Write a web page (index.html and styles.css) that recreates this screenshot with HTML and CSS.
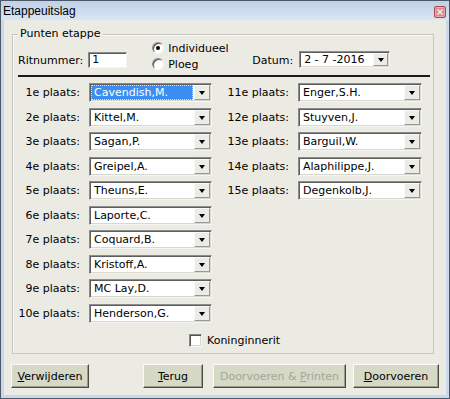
FILE: index.html
```html
<!DOCTYPE html>
<html>
<head>
<meta charset="utf-8">
<link rel="stylesheet" href="styles.css">
</head>
<body>
<div class="window">
  <div class="titlebar">
    <span class="title">Etappeuitslag</span>
    <span class="close">
      <svg width="12" height="12" viewBox="0 0 12 12">
        <rect x="0.5" y="0.5" width="11" height="11" rx="1.5" fill="#d88a8a" stroke="#a84848"/>
        <rect x="1.5" y="1.5" width="9" height="9" rx="1" fill="none" stroke="#eab0b0"/>
        <path d="M3.5 3.5 L8.5 8.5 M8.5 3.5 L3.5 8.5" stroke="#f4f0f0" stroke-width="1.6"/>
      </svg>
    </span>
  </div>
  <div class="client">
    <div class="group">
      <span class="legend">Punten etappe</span>
      <div class="toprow">
        <div class="field rit">
          <span class="lbl">Ritnummer:</span>
          <span class="input">1</span>
        </div>
        <div class="radios">
          <div class="radio"><span class="circle checked"></span>Individueel</div>
          <div class="radio"><span class="circle"></span>Ploeg</div>
        </div>
        <div class="field datum">
          <span class="lbl">Datum:</span>
          <div class="combo date"><span class="val">2 - 7 -2016</span><span class="arrow"></span></div>
        </div>
      </div>
      <div class="sep"></div>
      <div class="places">
        <span class="plab l">1e plaats:</span><div class="combo l focus"><span class="val sel">Cavendish,M.</span><span class="arrow"></span></div>
        <span class="plab r">11e plaats:</span><div class="combo r"><span class="val">Enger,S.H.</span><span class="arrow"></span></div>

        <span class="plab l">2e plaats:</span><div class="combo l"><span class="val">Kittel,M.</span><span class="arrow"></span></div>
        <span class="plab r">12e plaats:</span><div class="combo r"><span class="val">Stuyven,J.</span><span class="arrow"></span></div>

        <span class="plab l">3e plaats:</span><div class="combo l"><span class="val">Sagan,P.</span><span class="arrow"></span></div>
        <span class="plab r">13e plaats:</span><div class="combo r"><span class="val">Barguil,W.</span><span class="arrow"></span></div>

        <span class="plab l">4e plaats:</span><div class="combo l"><span class="val">Greipel,A.</span><span class="arrow"></span></div>
        <span class="plab r">14e plaats:</span><div class="combo r"><span class="val">Alaphilippe,J.</span><span class="arrow"></span></div>

        <span class="plab l">5e plaats:</span><div class="combo l"><span class="val">Theuns,E.</span><span class="arrow"></span></div>
        <span class="plab r">15e plaats:</span><div class="combo r"><span class="val">Degenkolb,J.</span><span class="arrow"></span></div>

        <span class="plab l">6e plaats:</span><div class="combo l"><span class="val">Laporte,C.</span><span class="arrow"></span></div>
        <span class="plab l">7e plaats:</span><div class="combo l"><span class="val">Coquard,B.</span><span class="arrow"></span></div>
        <span class="plab l">8e plaats:</span><div class="combo l"><span class="val">Kristoff,A.</span><span class="arrow"></span></div>
        <span class="plab l">9e plaats:</span><div class="combo l"><span class="val">MC Lay,D.</span><span class="arrow"></span></div>
        <span class="plab l">10e plaats:</span><div class="combo l"><span class="val">Henderson,G.</span><span class="arrow"></span></div>
      </div>
      <div class="check"><span class="box"></span>Koninginnerit</div>
    </div>
    <div class="buttons">
      <span class="btn b1"><span><u>V</u>erwijderen</span></span>
      <span class="btn b2"><span><u>T</u>erug</span></span>
      <span class="btn b3 disabled"><span>Doorvoeren &amp; <u>P</u>rinten</span></span>
      <span class="btn b4"><span><u>D</u>oorvoeren</span></span>
    </div>
  </div>
</div>
</body>
</html>
```

FILE: styles.css
```css
html, body {
  margin: 0;
  padding: 0;
}
body {
  width: 450px;
  height: 399px;
  overflow: hidden;
  font-family: "DejaVu Sans", Verdana, sans-serif;
  font-size: 11px;
  color: #000;
}
.window {
  width: 450px;
  height: 399px;
  box-sizing: border-box;
  border: 1px solid #4a5868;
  display: flex;
  flex-direction: column;
  background: #c9d8ea;
}
.titlebar {
  height: 19px;
  flex: none;
  display: flex;
  align-items: center;
  justify-content: space-between;
  background: linear-gradient(#c0d1e7, #dae5f2);
}
.title {
  font-family: "Liberation Sans", Arial, sans-serif;
  font-size: 12px;
  margin-left: 2px;
  margin-top: 1px;
}
.close {
  width: 12px;
  height: 12px;
  margin-right: 3px;
  margin-top: 3px;
  display: flex;
}
.client {
  flex: 1;
  background: #ebebe3;
  border-style: solid;
  border-width: 0 3px 3px 3px;
  border-color: #c9d8ea;
  display: flex;
  flex-direction: column;
}
.group {
  position: relative;
  margin: 14px 0 0 8px;
  width: 422px;
  height: 320px;
  box-sizing: border-box;
  border: 1px solid #c6c6be;
  box-shadow: inset 1px 1px 0 #fafaf6;
  padding: 5px 2px 0 5px;
}
.legend {
  position: absolute;
  left: 5px;
  top: -8px;
  padding: 0 2px;
  background: #ebebe3;
  line-height: 14px;
}
.toprow {
  display: flex;
  height: 32px;
}
.field {
  display: flex;
  align-items: center;
}
.lbl {
  padding-top: 1px;
}
.rit {
  margin-top: 12px;
  height: 16px;
}
.input {
  margin-left: 5px;
  width: 39px;
  height: 16px;
  box-sizing: border-box;
  background: #fff;
  border: 1px solid;
  border-color: #8c8c8c #f4f4f0 #f4f4f0 #8c8c8c;
  box-shadow: inset 1px 1px 0 #5a5a5a;
  padding-left: 3px;
  line-height: 14px;
}
.radios {
  margin-left: 25px;
  width: 100px;
  display: flex;
  flex-direction: column;
}
.radio {
  height: 16px;
  display: flex;
  align-items: center;
}
.circle {
  width: 12px;
  height: 12px;
  box-sizing: border-box;
  border-radius: 50%;
  border: 1px solid;
  border-color: #8a8a8a #f6f6f2 #f6f6f2 #8a8a8a;
  box-shadow: inset 1px 1px 0 #505050;
  background: #fff;
  margin-right: 4px;
  display: flex;
  align-items: center;
  justify-content: center;
}
.circle.checked::after {
  content: "";
  width: 4px;
  height: 4px;
  border-radius: 50%;
  background: #000;
}
.datum {
  margin-top: 11px;
  height: 17px;
}
.combo {
  display: flex;
  box-sizing: border-box;
  background: #fff;
  border: 1px solid;
  border-color: #8c8c8c #f4f4f0 #f4f4f0 #8c8c8c;
  box-shadow: inset 1px 1px 0 #5e5e5e, inset -1px -1px 0 #d8d8d0;
  padding: 1px;
}
.date {
  margin-left: 6px;
  width: 91px;
  height: 17px;
}
.val {
  flex: 1;
  padding-left: 3px;
  line-height: 13px;
  white-space: nowrap;
  overflow: hidden;
}
.places .val {
  line-height: 15px;
}
.val.sel {
  background: #3b8df2;
  color: #fff;
  outline: 1px dotted #d0e4ff;
  outline-offset: -1px;
  margin-right: 1px;
}
.arrow {
  width: 16px;
  flex: none;
  box-sizing: border-box;
  background: #ecece6;
  border: 1px solid;
  border-color: #fafaf8 #9a9a94 #9a9a94 #fafaf8;
  display: flex;
  align-items: center;
  justify-content: center;
}
.date .arrow {
  width: 15px;
}
.arrow::after {
  content: "";
  width: 0;
  height: 0;
  border-left: 3.5px solid transparent;
  border-right: 3.5px solid transparent;
  border-top: 4px solid #000;
  margin-top: 1px;
}
.sep {
  margin-top: 3px;
  width: 412px;
  height: 2px;
  background: #1a1a1a;
}
.places {
  margin-top: 6px;
  display: grid;
  grid-template-columns: 62px 123px 68px 124px;
  column-gap: 9px;
  grid-auto-rows: 19px;
  row-gap: 5.5px;
}
.plab {
  text-align: right;
  line-height: 19px;
  white-space: nowrap;
}
.plab.l { grid-column: 1; }
.combo.l { grid-column: 2; }
.plab.r { grid-column: 3; }
.combo.r { grid-column: 4; }
.check {
  margin: 11px 0 0 171px;
  display: flex;
  align-items: center;
  height: 14px;
}
.box {
  width: 13px;
  height: 13px;
  box-sizing: border-box;
  background: #fff;
  border: 1px solid;
  border-color: #8a8a8a #f6f6f2 #f6f6f2 #8a8a8a;
  box-shadow: inset 1px 1px 0 #505050, inset -1px -1px 0 #d8d8d0;
  margin-right: 5px;
}
.buttons {
  margin-top: 10px;
  display: flex;
}
.btn {
  height: 24px;
  box-sizing: border-box;
  display: flex;
  align-items: center;
  justify-content: center;
  background: #d5d9c6;
  border: 1px solid;
  border-color: #fbfbf6 #4a4a44 #4a4a44 #fbfbf6;
  box-shadow: inset -1px -1px 0 #9a9c8e;
  white-space: nowrap;
}
.b1 { margin-left: 7px; width: 78px; }
.b2 { margin-left: 54px; width: 60px; }
.b3 { margin-left: 10px; width: 133px; }
.b4 { margin-left: 7px; width: 86px; }
.disabled {
  color: #a4a69a;
}
```
